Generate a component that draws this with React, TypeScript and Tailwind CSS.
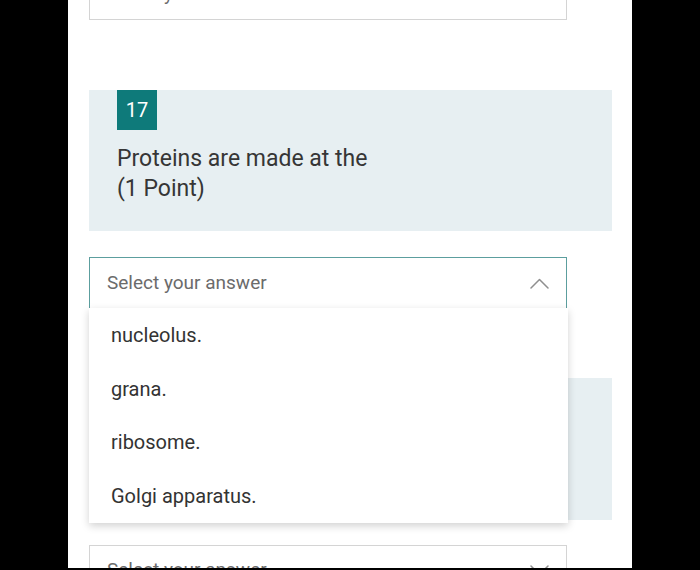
import React from 'react';

const options = ['nucleolus.', 'grana.', 'ribosome.', 'Golgi apparatus.'];

const Chevron = ({ up }: { up?: boolean }) => (
  <svg width="19" height="11" viewBox="0 0 19 11" fill="none">
    <path
      d={up ? 'M1 10 L9.5 1.5 L18 10' : 'M1 1 L9.5 9.5 L18 1'}
      stroke="#8f8f8f"
      strokeWidth="1.5"
      strokeLinecap="round"
      strokeLinejoin="round"
    />
  </svg>
);

const SelectBox = ({ open }: { open?: boolean }) => (
  <div
    className={`flex h-[51px] w-[478px] items-center justify-between bg-white pl-[17px] pr-[17px] ${
      open ? 'border border-b-0 border-[#5c9e9e]' : 'border border-[#d4d4d4]'
    }`}
  >
    <span className="text-[19px] text-[#6b6b6b]">Select your answer</span>
    <Chevron up={open} />
  </div>
);

export default function App() {
  return (
    <div
      className="flex h-[570px] w-[700px] justify-center bg-black"
      style={{ fontFamily: 'Roboto, "Noto Sans", sans-serif' }}
    >
      <div className="h-[568px] w-[564px] overflow-hidden bg-white">
        <div className="-mt-[31px] flex flex-col pl-[21px] pr-[20px]">
          <SelectBox />

          <div className="mt-[70px] h-[141px] bg-[#e7eff2] pl-[28px]">
            <div className="flex h-[40px] w-[40px] items-center justify-center bg-[#0e7a7a] text-[20px] text-white">
              17
            </div>
            <p className="mt-[14px] text-[23px] leading-[30px] text-[#363636]">
              Proteins are made at the
              <br />
              (1 Point)
            </p>
          </div>

          <div className="relative mt-[26px]">
            <SelectBox open />
            <div className="absolute left-0 top-[51px] z-10 w-[479px] bg-white shadow-[0_3px_8px_rgba(0,0,0,0.18)]">
              {options.map((o) => (
                <div
                  key={o}
                  className="flex h-[53.75px] items-center pl-[22px] text-[20px] text-[#333]"
                >
                  {o}
                </div>
              ))}
            </div>
          </div>

          <div className="mt-[70px] h-[142px] bg-[#e7eff2]" />

          <div className="mt-[25px]">
            <SelectBox />
          </div>
        </div>
      </div>
    </div>
  );
}
